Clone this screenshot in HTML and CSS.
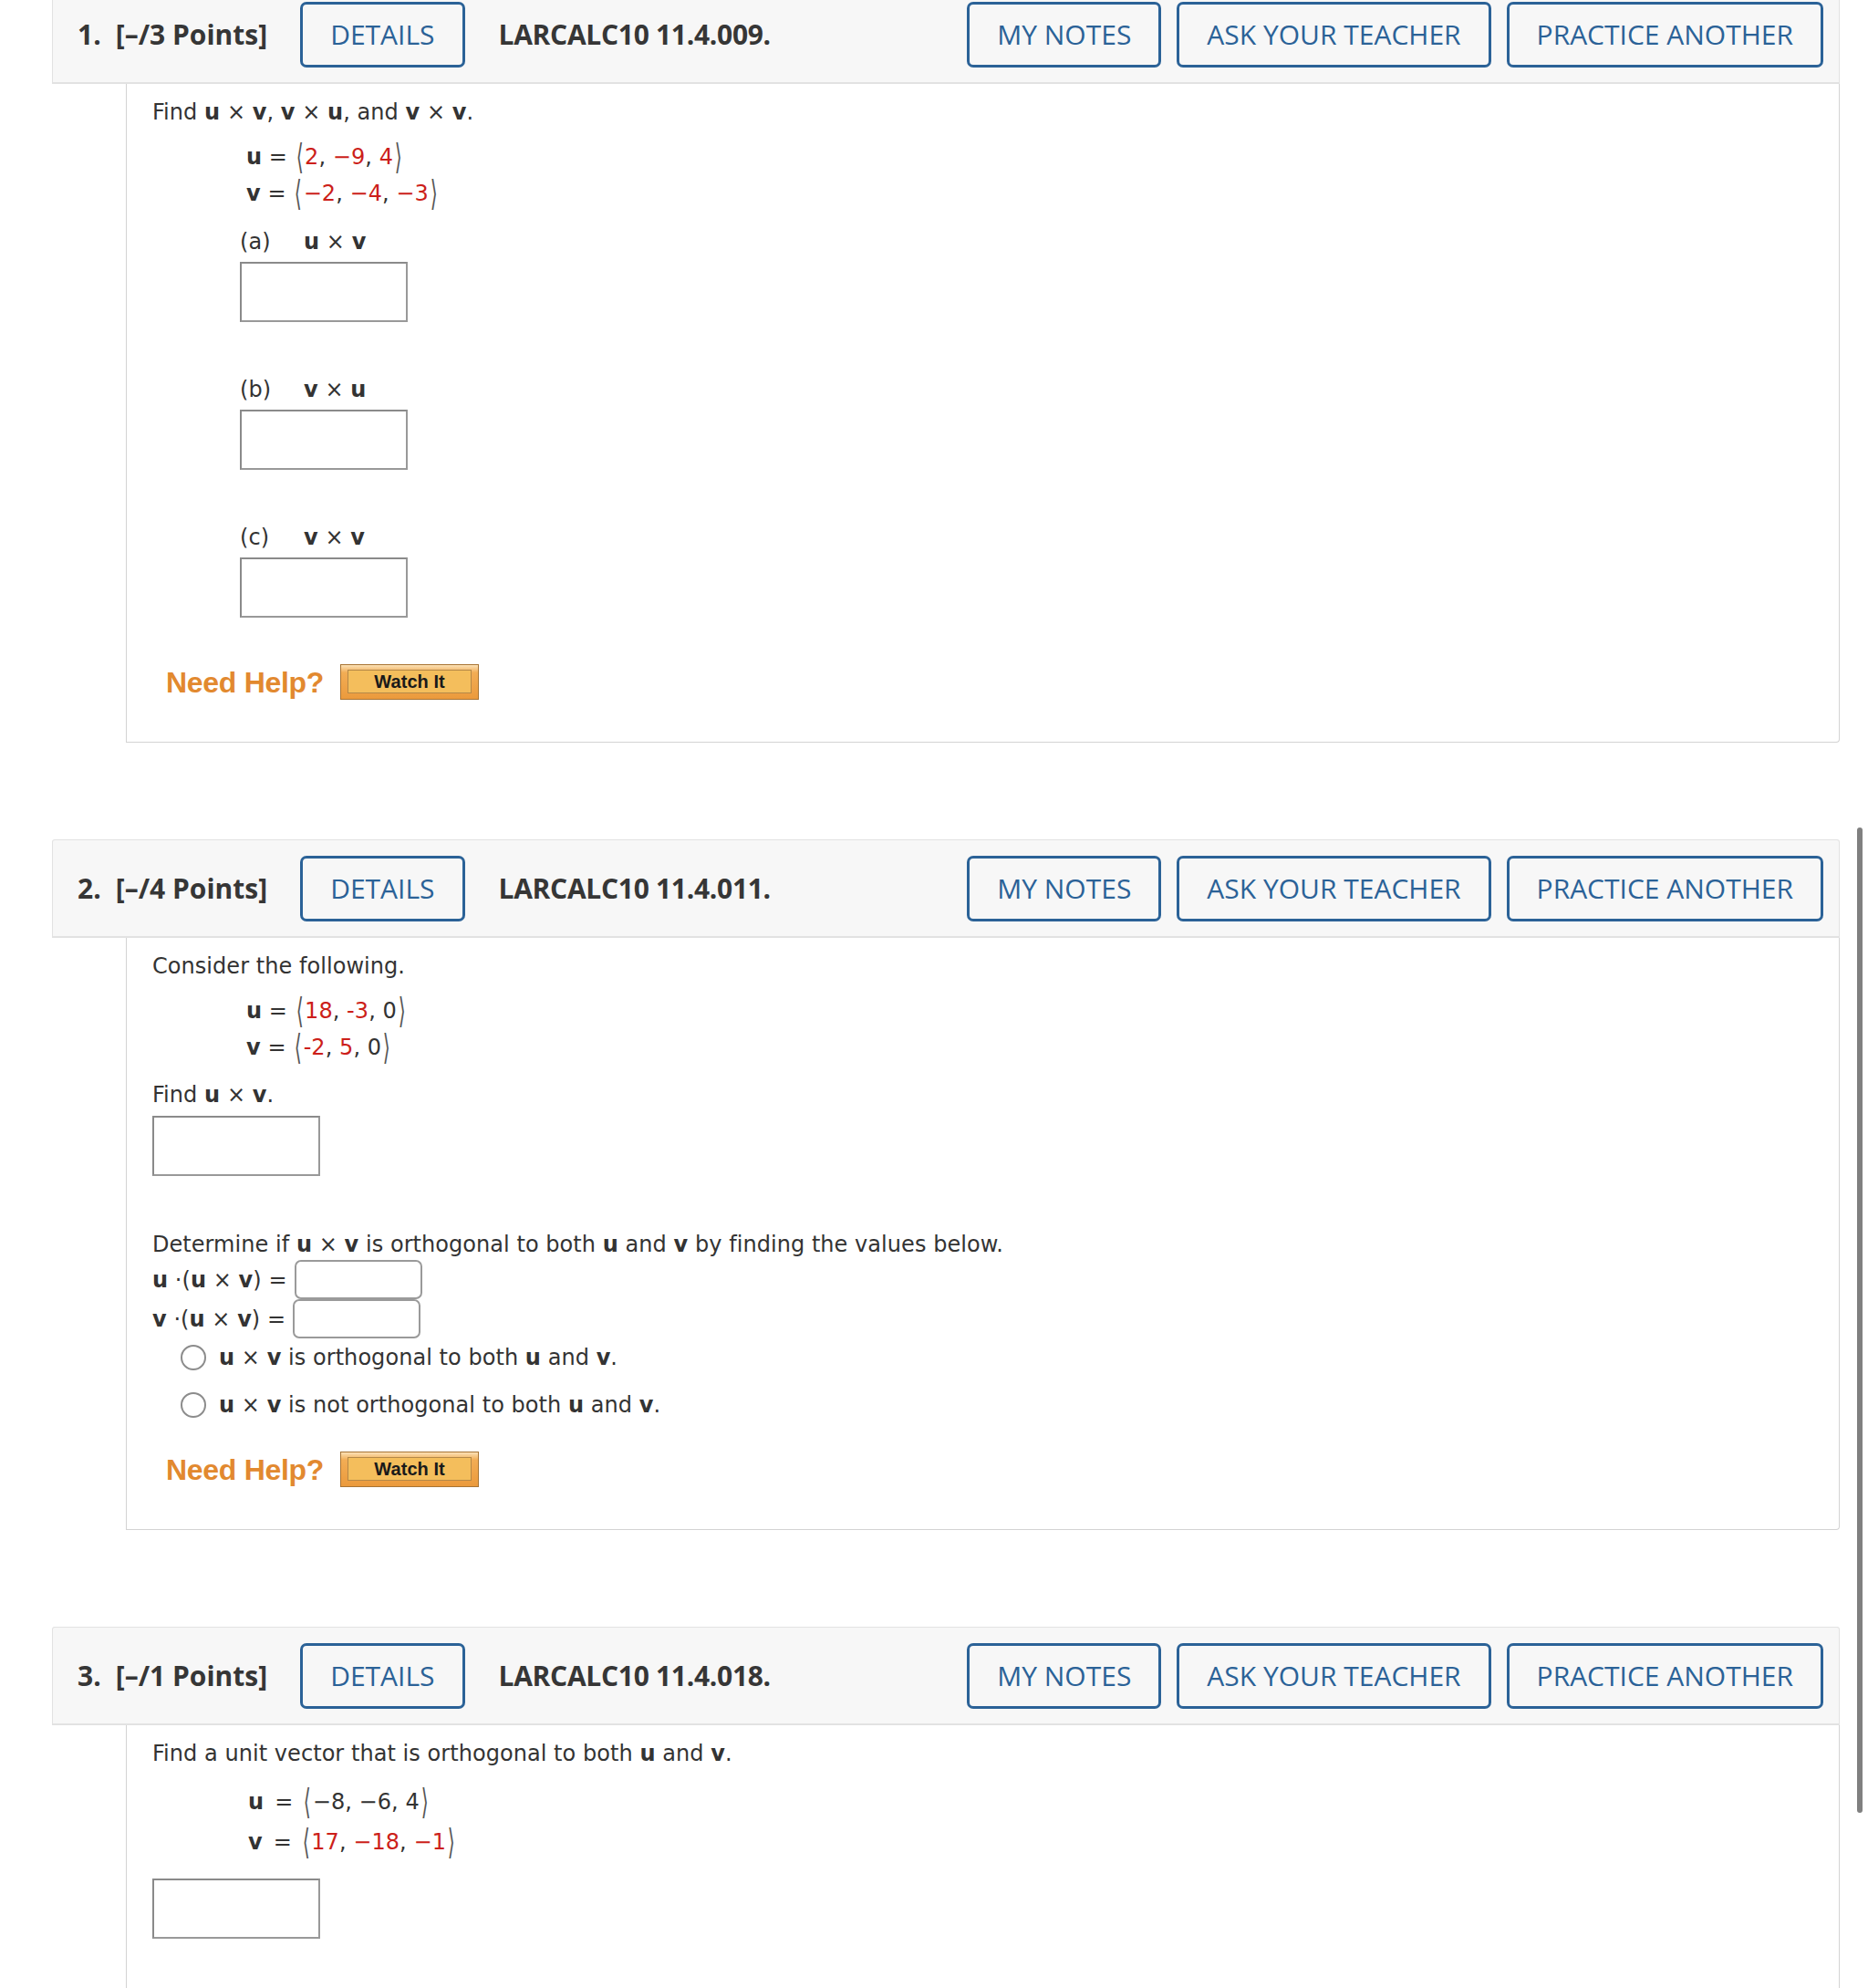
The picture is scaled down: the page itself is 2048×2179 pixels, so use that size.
FILE: index.html
```html
<!DOCTYPE html>
<html lang="en">
<head>
<meta charset="utf-8">
<title>WebAssign</title>
<link rel="stylesheet" href="styles.css">
</head>
<body>
<div class="page">

  <div class="question">
    <div class="qhead">
      <span class="qnum">1.</span><span class="qpts">[–/3 Points]</span>
      <button class="btn">DETAILS</button>
      <span class="qid">LARCALC10 11.4.009.</span>
      <div class="actions">
        <button class="btn">MY NOTES</button>
        <button class="btn">ASK YOUR TEACHER</button>
        <button class="btn">PRACTICE ANOTHER</button>
      </div>
    </div>
    <div class="qbody">
      <p class="line">Find <b>u</b> × <b>v</b>, <b>v</b> × <b>u</b>, and <b>v</b> × <b>v</b>.</p>
      <div class="vecs">
        <div class="vec"><b>u</b> = <span class="ang">⟨</span><span class="r">2</span>, <span class="r">−9</span>, <span class="r">4</span><span class="ang">⟩</span></div>
        <div class="vec"><b>v</b> = <span class="ang">⟨</span><span class="r">−2</span>, <span class="r">−4</span>, <span class="r">−3</span><span class="ang">⟩</span></div>
      </div>
      <div class="part">
        <div class="plabel"><span class="pl">(a)</span><b>u</b> × <b>v</b></div>
        <input class="ansbox" type="text">
      </div>
      <div class="part">
        <div class="plabel"><span class="pl">(b)</span><b>v</b> × <b>u</b></div>
        <input class="ansbox" type="text">
      </div>
      <div class="part">
        <div class="plabel"><span class="pl">(c)</span><b>v</b> × <b>v</b></div>
        <input class="ansbox" type="text">
      </div>
      <div class="help help-1">
        <span class="needhelp">Need Help?</span>
        <span class="watch"><span class="watch-in">Watch It</span></span>
      </div>
    </div>
  </div>

  <div class="question">
    <div class="qhead">
      <span class="qnum">2.</span><span class="qpts">[–/4 Points]</span>
      <button class="btn">DETAILS</button>
      <span class="qid">LARCALC10 11.4.011.</span>
      <div class="actions">
        <button class="btn">MY NOTES</button>
        <button class="btn">ASK YOUR TEACHER</button>
        <button class="btn">PRACTICE ANOTHER</button>
      </div>
    </div>
    <div class="qbody">
      <p class="line">Consider the following.</p>
      <div class="vecs">
        <div class="vec"><b>u</b> = <span class="ang">⟨</span><span class="r">18</span>, <span class="r">-3</span>, 0<span class="ang">⟩</span></div>
        <div class="vec"><b>v</b> = <span class="ang">⟨</span><span class="r">-2</span>, <span class="r">5</span>, 0<span class="ang">⟩</span></div>
      </div>
      <p class="line find">Find <b>u</b> × <b>v</b>.</p>
      <input class="ansbox flat" type="text">
      <p class="line determine">Determine if <b>u</b> × <b>v</b> is orthogonal to both <b>u</b> and <b>v</b> by finding the values below.</p>
      <div class="dotrow"><span><b>u</b> ·(<b>u</b> × <b>v</b>) =</span><input class="smallbox" type="text"></div>
      <div class="dotrow"><span><b>v</b> ·(<b>u</b> × <b>v</b>) =</span><input class="smallbox" type="text"></div>
      <div class="choices">
        <label class="choice"><span class="radio"></span><span><b>u</b> × <b>v</b> is orthogonal to both <b>u</b> and <b>v</b>.</span></label>
        <label class="choice"><span class="radio"></span><span><b>u</b> × <b>v</b> is not orthogonal to both <b>u</b> and <b>v</b>.</span></label>
      </div>
      <div class="help help-2">
        <span class="needhelp">Need Help?</span>
        <span class="watch"><span class="watch-in">Watch It</span></span>
      </div>
    </div>
  </div>

  <div class="question">
    <div class="qhead">
      <span class="qnum">3.</span><span class="qpts">[–/1 Points]</span>
      <button class="btn">DETAILS</button>
      <span class="qid">LARCALC10 11.4.018.</span>
      <div class="actions">
        <button class="btn">MY NOTES</button>
        <button class="btn">ASK YOUR TEACHER</button>
        <button class="btn">PRACTICE ANOTHER</button>
      </div>
    </div>
    <div class="qbody last">
      <p class="line">Find a unit vector that is orthogonal to both <b>u</b> and <b>v</b>.</p>
      <div class="vecs wide">
        <div class="vec"><b>u</b><span class="eq">=</span><span class="ang">⟨</span>−8, −6, 4<span class="ang">⟩</span></div>
        <div class="vec"><b>v</b><span class="eq">=</span><span class="ang">⟨</span><span class="r">17</span>, <span class="r">−18</span>, <span class="r">−1</span><span class="ang">⟩</span></div>
      </div>
      <input class="ansbox flat unit" type="text">
    </div>
  </div>

</div>
<div class="scroll-thumb"></div>
</body>
</html>
```

FILE: styles.css
```css
html, body {
  margin: 0;
  padding: 0;
  background: #ffffff;
}

body {
  font-family: "DejaVu Sans", Verdana, sans-serif;
  font-size: 24px;
  color: #333333;
  overflow: hidden;
}

.page {
  margin: -16px 31px 0 57px;
}

.question {
  margin-bottom: 106px;
}

/* ---------- header bar ---------- */
.qhead {
  display: flex;
  align-items: center;
  height: 108px;
  box-sizing: border-box;
  padding: 0 17px 0 27px;
  background: #f7f7f7;
  border: 1px solid #e2e2e2;
  border-bottom: 2px solid #e2e2e2;
  border-radius: 3px 3px 0 0;
  font-family: "Open Sans", "DejaVu Sans", sans-serif;
  font-size: 30px;
  color: #363636;
}

.qnum {
  font-weight: 700;
  margin-right: 16px;
}

.qpts {
  font-weight: 700;
  margin-right: 36px;
}

.qid {
  font-weight: 700;
  margin-left: 37px;
  letter-spacing: -0.3px;
}

.btn {
  height: 72px;
  box-sizing: border-box;
  padding: 0 30px;
  border: 3px solid #2b6297;
  border-radius: 7px;
  background: transparent;
  color: #2b6297;
  font-family: "Open Sans", "DejaVu Sans", sans-serif;
  font-size: 30px;
  font-weight: 500;
  line-height: 1;
  cursor: pointer;
}

.actions {
  margin-left: auto;
  display: flex;
  gap: 17px;
}

/* ---------- body box ---------- */
.qbody {
  margin-left: 81px;
  border: 1px solid #d3d3d3;
  border-top: 0;
  border-radius: 0 0 4px 0;
  padding: 14px 28px 46px 28px;
  line-height: 34px;
  letter-spacing: 0.05px;
}

.qbody.last {
  padding-bottom: 120px;
}

.line {
  margin: 0;
}

b {
  font-weight: 700;
  color: #333333;
}

.r {
  color: #cc1f1a;
}

.ang {
  display: inline-block;
  color: #555555;
  transform: scale(0.85, 1.6);
  margin: 0 1px;
}

.vecs {
  margin-top: 12px;
  padding-left: 103px;
}

.vec {
  line-height: 40px;
}

.vecs.wide {
  margin-top: 14px;
  padding-left: 105px;
}

.vecs.wide .vec {
  line-height: 44px;
}

.eq {
  margin: 0 10px 0 12px;
}

.part {
  margin-top: 16px;
  padding-left: 96px;
}

.part + .part {
  margin-top: 57px;
}

.pl {
  display: inline-block;
  width: 70px;
}

.ansbox {
  display: block;
  width: 184px;
  height: 66px;
  box-sizing: border-box;
  margin: 5px 0 0 0;
  padding: 0;
  border: 2px solid #999999;
  border-top-color: #8a8a8a;
  border-left-color: #8a8a8a;
  border-radius: 0;
  background: #ffffff;
  font-size: 24px;
}

.find {
  margin-top: 15px;
}

.find + .ansbox {
  margin-top: 6px;
}

.determine {
  margin-top: 58px;
}

.dotrow {
  display: flex;
  align-items: center;
  gap: 8px;
  height: 43px;
}

.smallbox {
  width: 140px;
  height: 43px;
  box-sizing: border-box;
  margin: 0;
  padding: 0;
  border: 2px solid #9a9a9a;
  border-radius: 7px;
  background: #ffffff;
}

.choices {
  margin-top: 4px;
  padding-left: 31px;
  display: flex;
  flex-direction: column;
  gap: 18px;
}

.choice {
  display: flex;
  align-items: center;
  gap: 14px;
  height: 34px;
}

.radio {
  width: 28px;
  height: 28px;
  box-sizing: border-box;
  border: 2.5px solid #8c8c8c;
  border-radius: 50%;
  background: #ffffff;
  flex: none;
}

.unit {
  margin-top: 18px;
}

/* ---------- need help ---------- */
.help {
  display: flex;
  align-items: center;
  gap: 18px;
  padding-left: 15px;
  height: 39px;
}

.help-1 {
  margin-top: 51px;
}

.help-2 {
  margin-top: 34px;
}

.needhelp {
  font-family: "Liberation Sans", Arial, sans-serif;
  font-weight: 700;
  font-size: 32px;
  color: #e2892f;
  line-height: 1;
  letter-spacing: -0.3px;
}

.watch {
  display: block;
  width: 152px;
  height: 39px;
  box-sizing: border-box;
  padding: 5px 7px 6px 7px;
  border: 1px solid #a87434;
  background: linear-gradient(#fbe1b6 0, #f2ad55 22%, #eb9a3c 100%);
}

.watch-in {
  display: flex;
  align-items: center;
  justify-content: center;
  height: 100%;
  box-sizing: border-box;
  border: 1px solid #b48848;
  background: #f4be5c;
  font-family: "Liberation Sans", Arial, sans-serif;
  font-weight: 700;
  font-size: 20px;
  color: #1a1a1a;
  line-height: 1;
}

/* overlay scrollbar thumb */
.scroll-thumb {
  position: fixed;
  left: 2036px;
  top: 907px;
  width: 6px;
  height: 1080px;
  border-radius: 3px;
  background: #808080;
}
```
